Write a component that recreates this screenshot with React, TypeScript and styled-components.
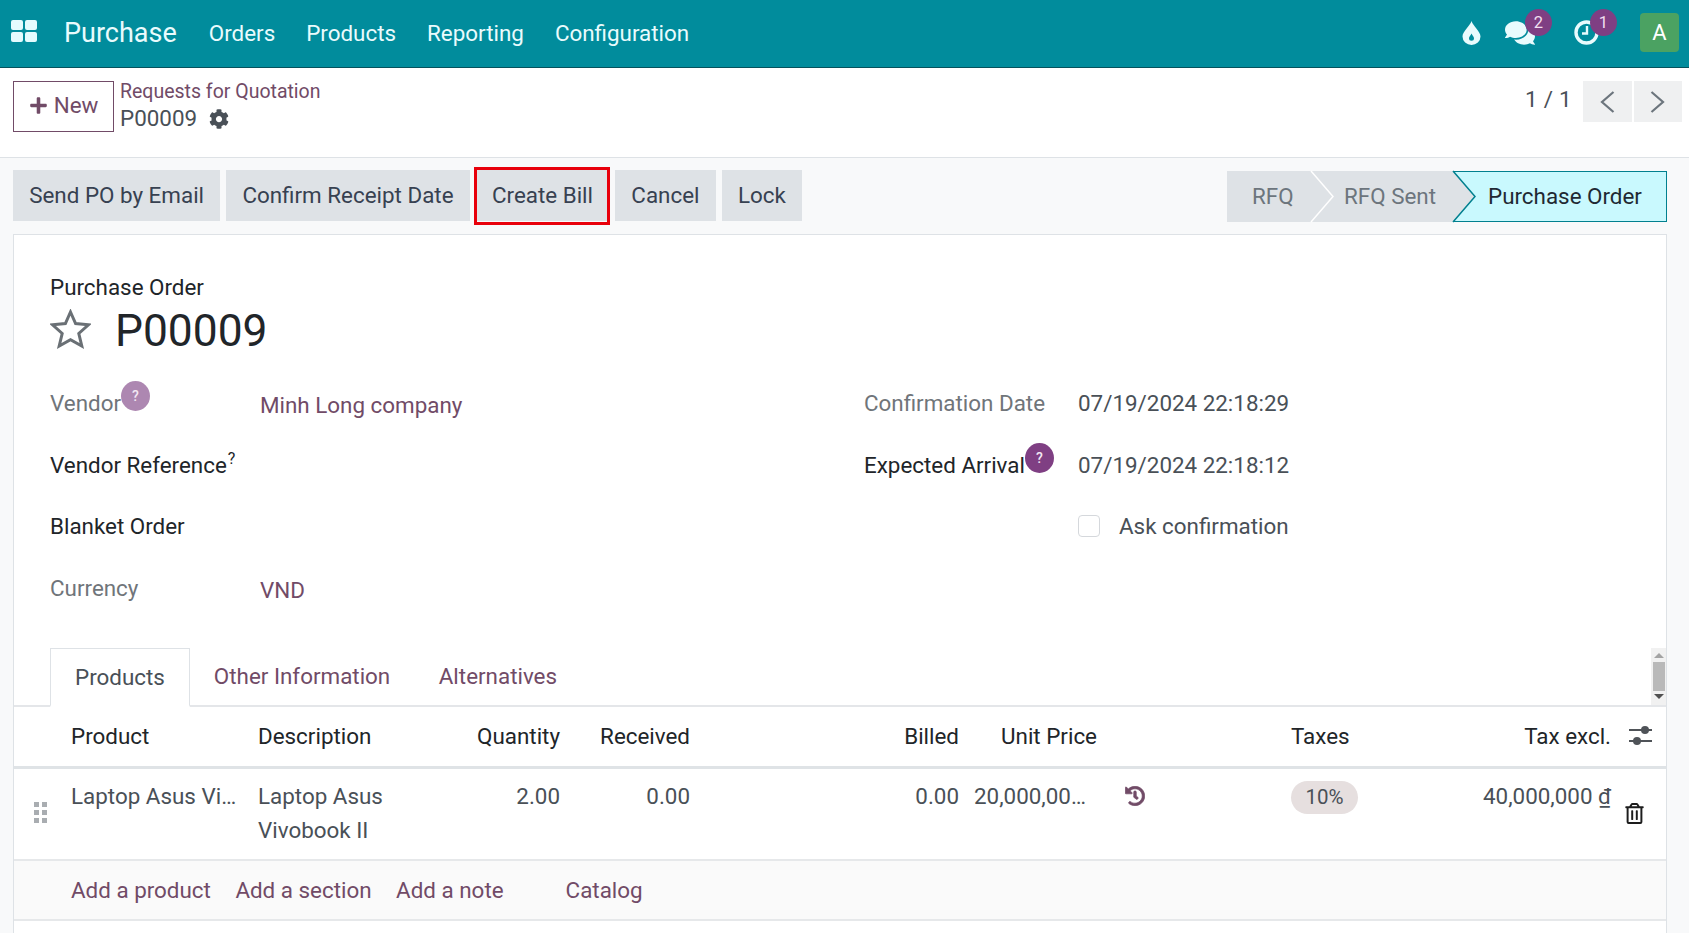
import React from 'react';
import styled, { createGlobalStyle } from 'styled-components';
import { FaCog, FaComments, FaHistory, FaPlus, FaRegTrashAlt } from 'react-icons/fa';

const Global = createGlobalStyle`
  html, body { margin: 0; padding: 0; height: 100%; overflow: hidden; }
  body { font-family: Roboto, "Liberation Sans", sans-serif; font-size: 22.4px; color: #495057; background: #f8f9fa; }
  * { box-sizing: border-box; }
`;

const purple = '#714b67';

const Page = styled.div`display: flex; flex-direction: column; height: 933px; width: 1689px; overflow: hidden;`;

const Navbar = styled.header`
  height: 68px; flex: none; background: #018c9c; border-bottom: 1px solid #05525c;
  display: flex; align-items: center; padding: 0 10px 2px 11px; color: #e9fbfd;
`;
const AppGrid = styled.div`display: grid; grid-template-columns: 12px 12px; grid-auto-rows: 10px; gap: 2px; margin-top: -4px;`;
const AppCell = styled.span`background: #e4fbfe; border-radius: 2px;`;
const Brand = styled.span`font-size: 27px; margin-left: 27px; margin-right: 32px;`;
const Menu = styled.nav`display: flex; gap: 31px;`;
const MenuItem = styled.span`font-size: 22.4px;`;
const Spacer = styled.div`flex: 1;`;
const Systray = styled.div`display: flex; align-items: center;`;
const TrayIcon = styled.span<{ $w: number }>`position: relative; display: flex; align-items: center; justify-content: center; height: 30px; width: ${p => p.$w}px;`;
const Bubble = styled.span<{ $r: number }>`
  position: absolute; top: -9px; right: ${p => p.$r}px; width: 27px; height: 27px; border-radius: 50%;
  background: #7f3f83; color: #f0dff0; font-size: 16.5px; display: flex; align-items: center; justify-content: center;
`;
const Avatar = styled.span`
  width: 39px; height: 39px; margin-left: 23px; border-radius: 4px; background: #4ba262; color: #fff;
  font-size: 22px; display: flex; align-items: center; justify-content: center;
`;

const ControlPanel = styled.div`
  height: 90px; flex: none; background: #fff; border-bottom: 1px solid #dee2e6;
  display: flex; align-items: flex-start; padding: 13px 7px 0 13px;
`;
const NewButton = styled.button`
  width: 101px; height: 51px; background: #fff; border: 1px solid ${purple}; color: ${purple}; font: inherit;
  display: flex; align-items: center; justify-content: center; gap: 6px; padding: 0 0 3px;
`;
const Breadcrumbs = styled.div`margin-left: 6px; margin-top: -3px; display: flex; flex-direction: column;`;
const CrumbLink = styled.span`color: ${purple}; font-size: 19.5px; line-height: 28px;`;
const CrumbCurrent = styled.span`display: flex; align-items: center; gap: 12px; font-size: 22.4px; line-height: 25px;`;
const Pager = styled.div`display: flex; align-items: flex-start; gap: 2px;`;
const PagerValue = styled.span`font-size: 22.4px; line-height: 37px; margin-right: 9px; letter-spacing: .3px;`;
const PagerButton = styled.span`
  width: 48.5px; height: 41px; background: #eff0f1; color: #6c757d; display: flex; align-items: center; justify-content: center;
`;

const Actions = styled.div`
  height: 76px; flex: none; display: flex; align-items: flex-start; padding: 12px 22px 0 13px;
`;
const ActionGroup = styled.div`display: flex; gap: 6px;`;
const ActionButton = styled.button`
  position: relative; height: 51px; padding: 0 16.2px 2px; border: 0; background: #dee2e6; color: #374151; font: inherit;
`;
const Highlight = styled.span`
  position: absolute; inset: -3px -1px -4px -2px; border: 3px solid #e8000b; pointer-events: none;
`;
const Status = styled.div`display: flex; height: 51px; margin-top: 1px;`;
const StatusStep = styled.div<{ $w: number; $active?: boolean; $pad: number }>`
  position: relative; width: ${p => p.$w}px; padding: 0 0 2px ${p => p.$pad}px; display: flex; align-items: center;
  background: ${p => (p.$active ? '#c9f9fe' : '#dee2e6')}; color: ${p => (p.$active ? '#1f2933' : '#6c757d')};
  ${p => p.$active && 'border: 1px solid #01808f; border-left: 0;'}
`;
const StatusArrow = styled.svg`position: absolute; left: 100%; top: -1px; z-index: 2; overflow: visible;`;

const Sheet = styled.main`
  flex: 1; margin: 0 22px 0 13px; background: #fff; border: 1px solid #dee2e6; border-bottom: 0;
  display: flex; flex-direction: column; padding-top: 37px;
`;
const Title = styled.div`padding-left: 36px;`;
const TitleLabel = styled.div`color: #212529; line-height: 30px;`;
const TitleName = styled.div`display: flex; align-items: center; gap: 24px; height: 50px; margin-top: 4px; color: #212529; font-size: 44.3px;`;
const FormGrid = styled.div`
  display: grid; grid-template-columns: 210px 604px 214px 1fr; grid-auto-rows: 61.7px; padding-left: 36px; margin-top: 16px;
  align-items: center; height: 276px;
`;
const Label = styled.div<{ $strong?: boolean }>`position: relative; color: ${p => (p.$strong ? '#212529' : '#70757a')}; width: fit-content;`;
const Hint = styled.span<{ $soft?: boolean }>`
  position: absolute; left: 100%; top: -9px; width: 29px; height: 30px; border-radius: 50%;
  background: ${p => (p.$soft ? '#ad87b1' : '#7f3f83')}; color: #f3e8f3; font-size: 14px; font-weight: 500;
  display: flex; align-items: center; justify-content: center;
`;
const Sup = styled.sup`font-size: 16px; line-height: 0; vertical-align: 9px; margin-left: 1px;`;
const LinkValue = styled.div`color: ${purple}; margin-top: 5px;`;
const DateValue = styled.div`color: #495057;`;
const CheckRow = styled.div`display: flex; align-items: center; gap: 19px;`;
const CheckBox = styled.span`width: 22px; height: 22px; border: 1px solid #d5d8dc; border-radius: 4px; background: #fff;`;

const TabBar = styled.div`
  display: flex; align-items: flex-end; height: 59px; border-bottom: 2px solid #e4e6e9; padding-left: 36px;
`;
const Tab = styled.div<{ $active?: boolean }>`
  height: 59px; padding: 0 24px; margin-bottom: -2px; line-height: 56px;
  ${p => p.$active
    ? 'border: 1px solid #dee2e6; border-bottom: 2px solid #fff; background: #fff; color: #495057;'
    : `color: ${purple}; padding: 0 24.5px 0 24px;`}
`;
const Scroller = styled.div`
  margin-left: auto; align-self: stretch; width: 15px; background: #f1f1f1; display: flex; flex-direction: column; align-items: center; justify-content: space-between; padding: 5px 0 6px;
`;
const ScrollThumb = styled.span`width: 12px; height: 29px; background: #b9b9b9; margin: -1px 0;`;
const Triangle = styled.span<{ $up?: boolean; $dark?: boolean }>`
  width: 0; height: 0; border-left: 5px solid transparent; border-right: 5px solid transparent;
  ${p => (p.$up ? 'border-bottom' : 'border-top')}: 5px solid ${p => (p.$dark ? '#505050' : '#a3a3a3')};
`;

const Columns = '57px 187px 191px 111px 130px 269px 138px 194px 130px 190px 1fr';
const HeaderRow = styled.div`
  display: grid; grid-template-columns: ${Columns}; height: 62px; padding-bottom: 2px; align-items: center; color: #212529;
  border-bottom: 3px solid #dfe3e6;
`;
const DataRow = styled.div`
  display: grid; grid-template-columns: ${Columns}; height: 92px; border-bottom: 2px solid #e6e8ea; color: #495057; align-items: start;
  line-height: 34px; padding-top: 10px;
`;
const Cell = styled.div<{ $right?: boolean }>`
  text-align: ${p => (p.$right ? 'right' : 'left')}; white-space: nowrap; position: relative; min-width: 0;
`;
const Wrap = styled(Cell)`white-space: normal; width: 130px;`;
const UnitValue = styled(Cell)`margin-left: 15px;`;
const DragCell = styled.div`display: grid; grid-template-columns: 5px 5px; grid-auto-rows: 5px; gap: 3px; margin: 23px 0 0 20px; width: 14px;`;
const Dot = styled.span`background: #a9adb1;`;
const HistoryCell = styled.div`padding-left: 28px; color: ${purple}; font-size: 20px; line-height: 0; padding-top: 7px;`;
const TaxBadge = styled.span`
  display: inline-flex; align-items: center; justify-content: center; width: 67px; height: 33px; border-radius: 17px; margin-top: -1px;
  background: #e6dfdf; color: #495057; font-size: 20.5px;
`;
const IconCell = styled.div`padding-left: 18px; display: flex; color: #333;`;
const TrashCell = styled(IconCell)`padding-left: 13px; padding-top: 24px; font-size: 21px; color: #1d1d1d;`;
const AddRow = styled.div`
  height: 60px; background: #fafafa; border-bottom: 2px solid #e6e8ea; display: flex; align-items: center; padding-left: 57px; color: ${purple};
`;
const AddLink = styled.span<{ $gap: number }>`margin-right: ${p => p.$gap}px;`;

const Sliders = () => (
  <svg width="23" height="21" viewBox="0 0 23 21" fill="#4f5358">
    <rect y="4" width="23" height="2" />
    <circle cx="16" cy="5" r="4" />
    <rect y="15" width="23" height="2" />
    <circle cx="8" cy="16" r="4" />
  </svg>
);

const Drop = () => (
  <svg width="19" height="24" viewBox="0 0 19 24">
    <path d="M9.5 0 C11 5 18.5 10.5 18.5 15.5 A9 8.5 0 0 1 .5 15.5 C.5 10.5 8 5 9.5 0Z" fill="#e9fbfd" />
    <path d="M9.5 12.5 C10.2 14.2 12 15.6 12 17.2 A2.5 2.5 0 0 1 7 17.2 C7 15.6 8.8 14.2 9.5 12.5Z" fill="#018c9c" />
  </svg>
);

const ClockRing = () => (
  <svg width="25" height="25" viewBox="0 0 25 25" fill="none" stroke="#e9fbfd">
    <circle cx="12.5" cy="12.5" r="10.5" strokeWidth="3.4" />
    <path d="M13 6 V13.5 H8" strokeWidth="2.4" />
  </svg>
);

const Chevron = ({ left }: { left?: boolean }) => (
  <svg width="15" height="22" viewBox="0 0 15 22" fill="none" stroke="#6c757d" strokeWidth="2.2">
    <polyline points={left ? '13.5,1 2,11 13.5,21' : '1.5,1 13,11 1.5,21'} />
  </svg>
);

const StarSvg = styled.svg`margin-bottom: 4px;`;
const StarOutline = () => (
  <StarSvg width="41" height="40" viewBox="0 0 41 40" fill="none" stroke="#6a7075" strokeWidth="3" strokeLinejoin="miter">
    <polygon points="20.5,3 25.6,14.5 38.5,15.8 28.8,24.5 31.8,37 20.5,30.6 9.2,37 12.2,24.5 2.5,15.8 15.4,14.5" />
  </StarSvg>
);

export default function App() {
  return (
    <Page>
      <Global />
      <Navbar>
        <AppGrid><AppCell /><AppCell /><AppCell /><AppCell /></AppGrid>
        <Brand>Purchase</Brand>
        <Menu>
          <MenuItem>Orders</MenuItem>
          <MenuItem>Products</MenuItem>
          <MenuItem>Reporting</MenuItem>
          <MenuItem>Configuration</MenuItem>
        </Menu>
        <Spacer />
        <Systray>
          <TrayIcon $w={28}><Drop /></TrayIcon>
          <TrayIcon $w={70}><FaComments size={30} /><Bubble $r={3}>2</Bubble></TrayIcon>
          <TrayIcon $w={62}><ClockRing /><Bubble $r={0}>1</Bubble></TrayIcon>
          <Avatar>A</Avatar>
        </Systray>
      </Navbar>
      <ControlPanel>
        <NewButton><FaPlus size={19} />New</NewButton>
        <Breadcrumbs>
          <CrumbLink>Requests for Quotation</CrumbLink>
          <CrumbCurrent>P00009 <FaCog size={20} /></CrumbCurrent>
        </Breadcrumbs>
        <Spacer />
        <Pager>
          <PagerValue>1 / 1</PagerValue>
          <PagerButton><Chevron left /></PagerButton>
          <PagerButton><Chevron /></PagerButton>
        </Pager>
      </ControlPanel>
      <Actions>
        <ActionGroup>
          <ActionButton>Send PO by Email</ActionButton>
          <ActionButton>Confirm Receipt Date</ActionButton>
          <ActionButton>Create Bill<Highlight /></ActionButton>
          <ActionButton>Cancel</ActionButton>
          <ActionButton>Lock</ActionButton>
        </ActionGroup>
        <Spacer />
        <Status>
          <StatusStep $w={84} $pad={25}>RFQ
            <StatusArrow width="23" height="53"><path d="M0 1 L22 26.5 L0 52 L0 1Z" fill="#dee2e6" /><path d="M0 1 L22 26.5 L0 52" fill="none" stroke="#fff" strokeWidth="1.5" /></StatusArrow>
          </StatusStep>
          <StatusStep $w={142} $pad={33}>RFQ Sent
            <StatusArrow width="23" height="53"><path d="M0 1 L22 26.5 L0 52 L0 1Z" fill="#dee2e6" /><path d="M0 1 L22 26.5 L0 52" fill="none" stroke="#01808f" strokeWidth="1.5" /></StatusArrow>
          </StatusStep>
          <StatusStep $w={214} $pad={35} $active>Purchase Order</StatusStep>
        </Status>
      </Actions>
      <Sheet>
        <Title>
          <TitleLabel>Purchase Order</TitleLabel>
          <TitleName><StarOutline />P00009</TitleName>
        </Title>
        <FormGrid>
          <Label>Vendor<Hint $soft>?</Hint></Label>
          <LinkValue>Minh Long company</LinkValue>
          <Label>Confirmation Date</Label>
          <DateValue>07/19/2024 22:18:29</DateValue>

          <Label $strong>Vendor Reference<Sup>?</Sup></Label>
          <div />
          <Label $strong>Expected Arrival<Hint>?</Hint></Label>
          <DateValue>07/19/2024 22:18:12</DateValue>

          <Label $strong>Blanket Order</Label>
          <div />
          <div />
          <CheckRow><CheckBox />Ask confirmation</CheckRow>

          <Label>Currency</Label>
          <LinkValue>VND</LinkValue>
          <div />
          <div />
        </FormGrid>
        <TabBar>
          <Tab $active>Products</Tab>
          <Tab>Other Information</Tab>
          <Tab>Alternatives</Tab>
          <Scroller><Triangle $up /><ScrollThumb /><Triangle $dark /></Scroller>
        </TabBar>
        <HeaderRow>
          <Cell />
          <Cell>Product</Cell>
          <Cell>Description</Cell>
          <Cell $right>Quantity</Cell>
          <Cell $right>Received</Cell>
          <Cell $right>Billed</Cell>
          <Cell $right>Unit Price</Cell>
          <Cell />
          <Cell>Taxes</Cell>
          <Cell $right>Tax excl.</Cell>
          <IconCell><Sliders /></IconCell>
        </HeaderRow>
        <DataRow>
          <DragCell><Dot /><Dot /><Dot /><Dot /><Dot /><Dot /></DragCell>
          <Cell>Laptop Asus Vi…</Cell>
          <Wrap>Laptop Asus Vivobook II</Wrap>
          <Cell $right>2.00</Cell>
          <Cell $right>0.00</Cell>
          <Cell $right>0.00</Cell>
          <UnitValue>20,000,00…</UnitValue>
          <HistoryCell><FaHistory stroke="currentColor" strokeWidth={18} /></HistoryCell>
          <Cell><TaxBadge>10%</TaxBadge></Cell>
          <Cell $right>40,000,000 ₫</Cell>
          <TrashCell><FaRegTrashAlt /></TrashCell>
        </DataRow>
        <AddRow>
          <AddLink $gap={24.5}>Add a product</AddLink>
          <AddLink $gap={24.5}>Add a section</AddLink>
          <AddLink $gap={62}>Add a note</AddLink>
          <AddLink $gap={0}>Catalog</AddLink>
        </AddRow>
      </Sheet>
    </Page>
  );
}
